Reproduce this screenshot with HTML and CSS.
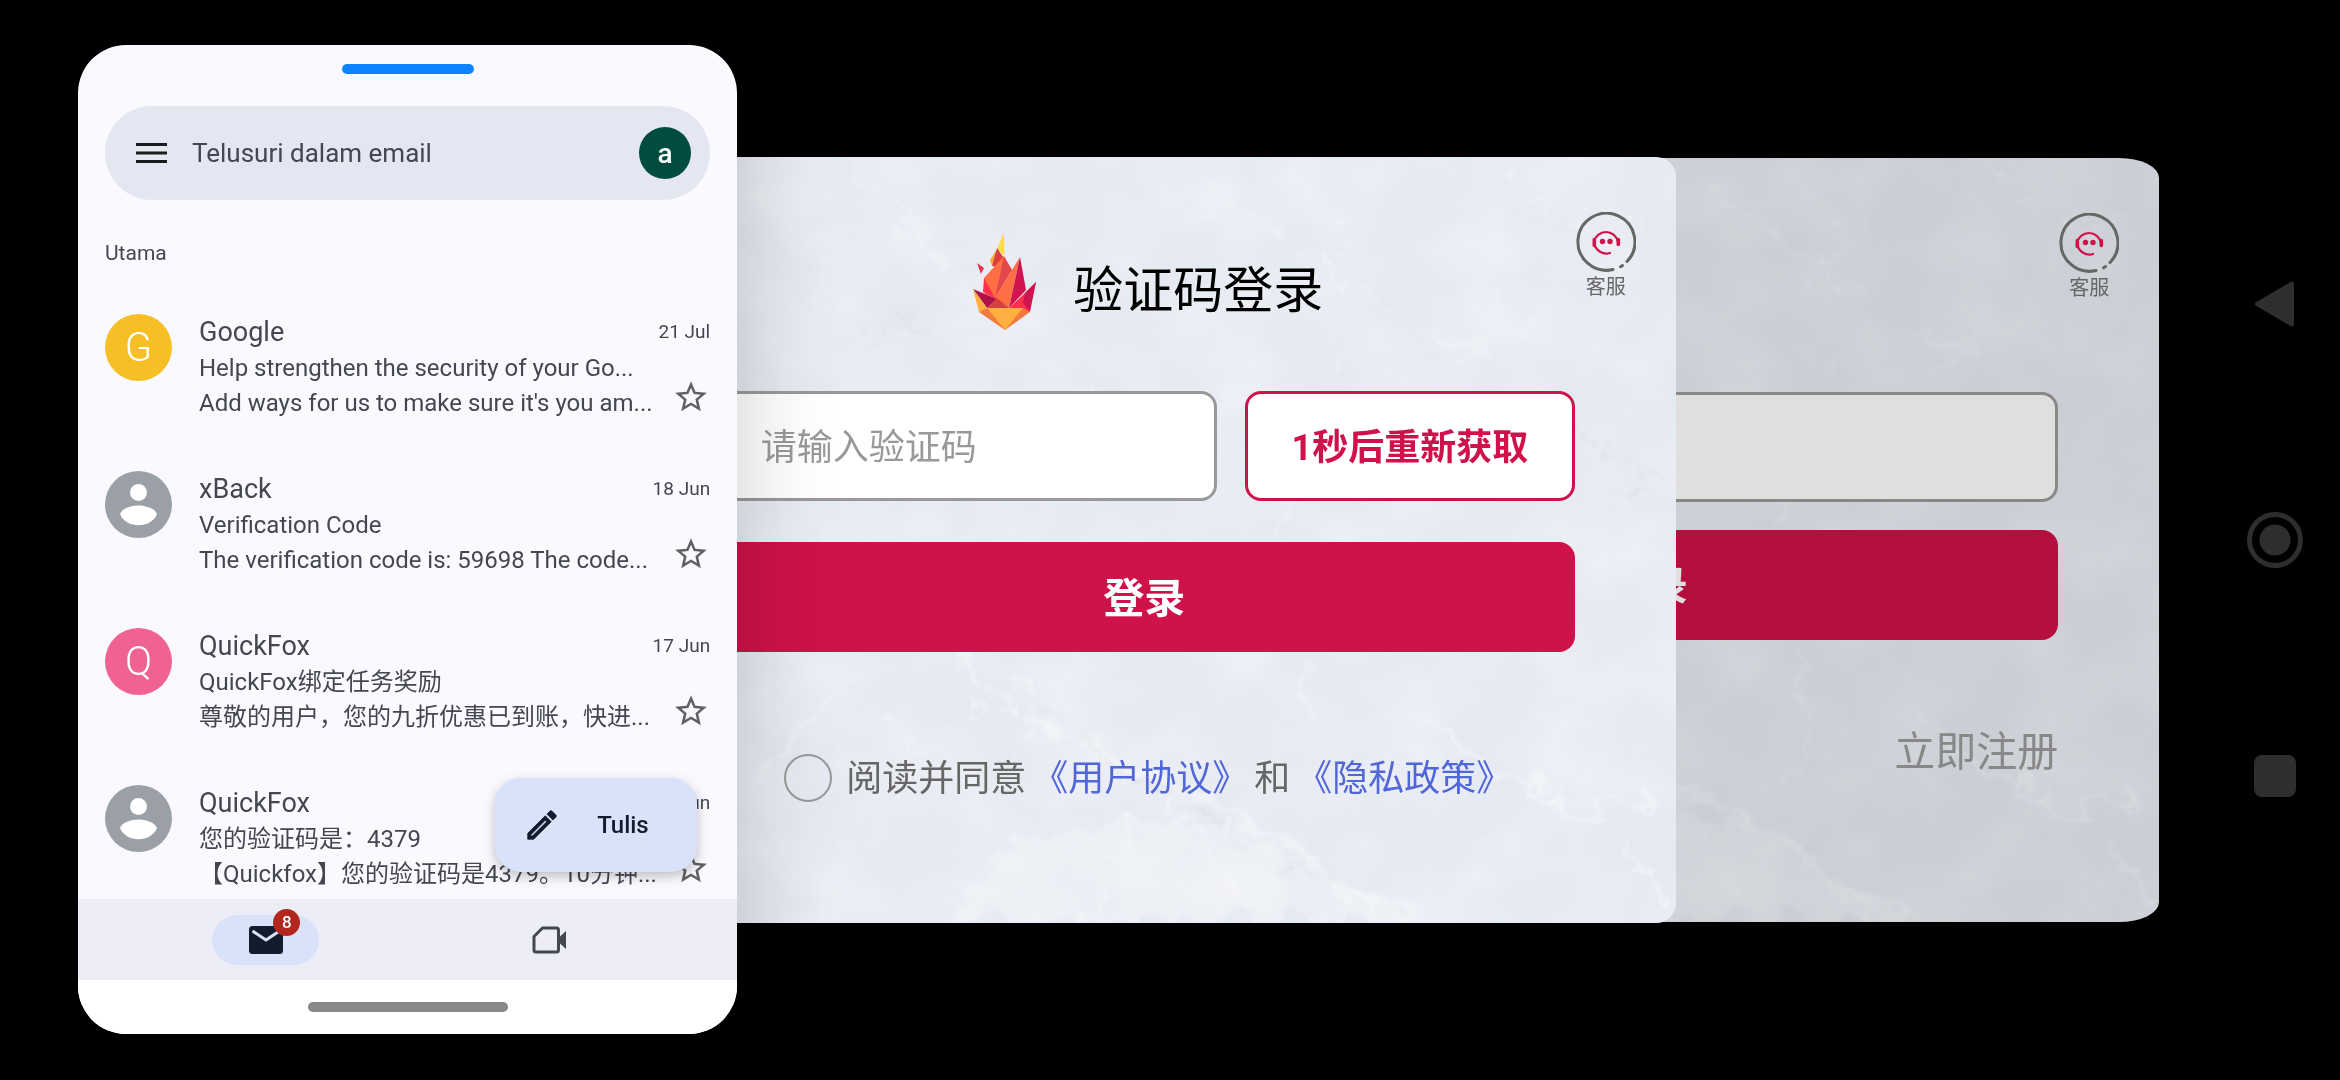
FILE: index.html
```html
<!DOCTYPE html>
<html lang="zh">
<head>
    <meta charset="UTF-8">
    <meta name="viewport" content="width=device-width, initial-scale=1.0">
    <title>Email</title>
    <link rel="stylesheet" href="styles.css">
</head>
<body>
    <!-- shared shapes -->
    <svg class="defs" width="0" height="0" aria-hidden="true">
        <defs>
            <filter id="clouds" x="0" y="0" width="100%" height="100%">
                <feTurbulence type="fractalNoise" baseFrequency="0.012 0.014" numOctaves="7" seed="7"/>
                <feColorMatrix values="0 0 0 0 1  0 0 0 0 1  0 0 0 0 1  2 0 0 0 -0.6"/>
            </filter>
            <filter id="rough" x="-10%" y="-10%" width="120%" height="120%">
                <feTurbulence type="fractalNoise" baseFrequency="0.03" numOctaves="5" seed="3" result="n"/>
                <feDisplacementMap in="SourceGraphic" in2="n" scale="60" xChannelSelector="R" yChannelSelector="G"/>
                <feGaussianBlur stdDeviation="1.5"/>
            </filter>
            <symbol id="marble" viewBox="0 0 1063 764" preserveAspectRatio="none">
                <rect width="1063" height="764" filter="url(#clouds)" opacity="0.3"/>
                <g filter="url(#rough)" fill="none" stroke="#fff" stroke-linecap="round">
                    <path d="M320 764L400 690L500 660L620 665L720 710L800 764Z" fill="#fff" stroke="none" opacity="0.25"/>
                    <path d="M340 490L410 560L500 600L600 645L700 700L760 764" stroke-width="8" opacity="0.3"/>
                    <path d="M400 520L450 590L540 620M500 600L520 660L470 764M560 640L640 764M360 550L410 555" stroke-width="4" opacity="0.3"/>
                    <path d="M130 630L200 560L250 500M270 560L310 590M690 490L700 580L680 640" stroke-width="4" opacity="0.3"/>
                    <path d="M820 560L880 610L980 660L1040 630M1020 690L1063 750" stroke-width="6" opacity="0.35"/>
                    <path d="M240 0L340 110L440 180M600 30L680 80L760 150L860 200M880 0L940 60L1063 80" stroke-width="4" opacity="0.25"/>
                    <path d="M880 130L870 190L820 240M730 180L700 290L640 420M480 200L500 300M760 40L700 130" stroke-width="4" opacity="0.25"/>
                </g>
                <g filter="url(#rough)" fill="none" stroke="#9aa3b0">
                    <path d="M110 220L160 260M240 190L330 160M200 380L260 420M430 540L480 600L720 720M930 250L1040 330" stroke-width="1" opacity="0.2"/>
                </g>
            </symbol>
            <symbol id="agent" viewBox="0 0 60 60">
                <path d="M37 57.5A28.5 28.5 0 1 1 51 49.500" fill="none" stroke="#666" stroke-width="3" stroke-linecap="round"/>
                <path d="M44.500 54.800L46.500 53.600" stroke="#666" stroke-width="3" stroke-linecap="round"/>
                <path d="M18 30A12.200 12.200 0 0 1 42 30M18.500 31.500A12 12 0 0 0 34 41" fill="none" stroke="#cf1249" stroke-width="2.200" stroke-linecap="round"/>
                <path d="M18.300 27.500v6M42.300 27.500v5" stroke="#cf1249" stroke-width="3.600" stroke-linecap="round"/>
                <circle cx="26.500" cy="29.500" r="2.700" fill="#cf1249"/>
                <circle cx="34" cy="29.500" r="2.700" fill="#cf1249"/>
            </symbol>
            <symbol id="star" viewBox="0 0 24 24">
                <path d="M22 9.240l-7.190-.620L12 2 9.190 8.630 2 9.240l5.460 4.730L5.820 21 12 17.270 18.180 21l-1.630-7.030L22 9.240zM12 15.400l-3.760 2.270 1-4.280-3.320-2.880 4.380-.380L12 6.100l1.710 4.040 4.380.380-3.320 2.880 1 4.280L12 15.400z"/>
            </symbol>
            <symbol id="person" viewBox="0 0 67 67">
                <circle cx="33.500" cy="21.500" r="8.500"/>
                <path d="M15 43C20 31.500 47 31.500 52 43C46 58 21 58 15 43Z"/>
            </symbol>
        </defs>
    </svg>

    <main class="stage">
        <section class="phone">
            <div class="handle"></div>

            <div class="search">
                <button class="icon-btn" aria-label="Menu">
                    <svg width="32" height="32" viewBox="0 0 32 32"><path d="M0 7.500h31M0 16h31M0 24.500h31" stroke="#1b1b1f" stroke-width="3.200"/></svg>
                </button>
                <input type="search" placeholder="Telusuri dalam email" aria-label="Telusuri dalam email">
                <button class="account">a</button>
            </div>

            <h2 class="label">Utama</h2>

            <ul class="mails">
                <li class="mail">
                    <span class="avatar yellow">G</span>
                    <div class="text">
                        <h3>Google</h3>
                        <p>Help strengthen the security of your Go...</p>
                        <p>Add ways for us to make sure it's you am...</p>
                    </div>
                    <div class="side">
                        <time>21 Jul</time>
                        <button class="icon-btn" aria-label="Star"><svg width="38" height="38"><use href="#star"/></svg></button>
                    </div>
                </li>
                <li class="mail">
                    <span class="avatar"><svg width="67" height="67"><use href="#person"/></svg></span>
                    <div class="text">
                        <h3>xBack</h3>
                        <p>Verification Code</p>
                        <p>The verification code is: 59698 The code...</p>
                    </div>
                    <div class="side">
                        <time>18 Jun</time>
                        <button class="icon-btn" aria-label="Star"><svg width="38" height="38"><use href="#star"/></svg></button>
                    </div>
                </li>
                <li class="mail">
                    <span class="avatar pink">Q</span>
                    <div class="text">
                        <h3>QuickFox</h3>
                        <p>QuickFox绑定任务奖励</p>
                        <p>尊敬的用户，您的九折优惠已到账，快进...</p>
                    </div>
                    <div class="side">
                        <time>17 Jun</time>
                        <button class="icon-btn" aria-label="Star"><svg width="38" height="38"><use href="#star"/></svg></button>
                    </div>
                </li>
                <li class="mail">
                    <span class="avatar"><svg width="67" height="67"><use href="#person"/></svg></span>
                    <div class="text">
                        <h3>QuickFox</h3>
                        <p>您的验证码是：4379</p>
                        <p>【Quickfox】您的验证码是4379。10分钟...</p>
                    </div>
                    <div class="side">
                        <time>17 Jun</time>
                        <button class="icon-btn" aria-label="Star"><svg width="38" height="38"><use href="#star"/></svg></button>
                    </div>
                </li>
            </ul>

            <nav class="tabs">
                <button class="compose">
                    <svg width="38" height="38" viewBox="0 0 24 24" fill="#111c2d" stroke="#111c2d" stroke-width="0.500"><path d="M14.060 9.020l.920.920L5.920 19H5v-.920l9.060-9.060M17.660 3c-.250 0-.510.100-.700.290l-1.830 1.830 3.750 3.750 1.830-1.830c.390-.390.390-1.020 0-1.410l-2.340-2.340c-.200-.200-.450-.290-.710-.290zm-3.600 3.190L3 17.250V21h3.750L17.810 9.940l-3.750-3.750z"/></svg>
                    Tulis
                </button>
                <div class="tab">
                    <button class="pill active" aria-label="Email">
                        <svg width="34" height="28" viewBox="0 0 34 28"><rect width="34" height="28" rx="3.500" fill="#111c2d"/><path d="M3.500 5L17 14L30.500 5" fill="none" stroke="#dae2f9" stroke-width="3"/></svg>
                        <span class="badge">8</span>
                    </button>
                </div>
                <div class="tab">
                    <button class="pill" aria-label="Meet">
                        <svg width="34" height="28" viewBox="0 0 34 28"><path d="M10.500 2H24.500Q26.500 2 26.500 4V24Q26.500 26 24.500 26H4Q2 26 2 24V10.500Z" fill="none" stroke="#44474f" stroke-width="3" stroke-linejoin="round"/><path d="M26.500 12L34 5V23L26.500 16Z" fill="#44474f"/></svg>
                    </button>
                </div>
            </nav>
            <div class="gesture"><span></span></div>
        </section>

        <section class="card login">
            <svg class="texture" aria-hidden="true"><use href="#marble"/></svg>
            <header>
                <svg width="64" height="98" viewBox="0 0 64 98">
                    <path d="M31 0L31.500 24L24 17Z" fill="#fddc45"/>
                    <path d="M24 17L17 28L19 34L24 17Z" fill="#f9a638"/>
                    <path d="M24 16L39 38L19 34Z" fill="#d8403f"/>
                    <path d="M31 24L11 46L12 62L23 67Z" fill="#ff6f43"/>
                    <path d="M31 24L39 38L22 66Z" fill="#e5484a"/>
                    <path d="M11 46L10 60L22 66Z" fill="#ff2e4c"/>
                    <path d="M47 25L39 38L22 66L36 76Z" fill="#ff6f43"/>
                    <path d="M47 25L53 58L36 76Z" fill="#d11350"/>
                    <path d="M63 50L56 80L36 76L52 61Z" fill="#ff2e4c"/>
                    <path d="M63 50L57 80L50 71L52 61Z" fill="#d11350"/>
                    <path d="M0 57L24 67L14 76Z" fill="#b01248"/>
                    <path d="M0 57L14 76L6 80Z" fill="#ffae3b"/>
                    <path d="M14 76L24 66L36 76Z" fill="#d8403f"/>
                    <path d="M6 80L14 76H50L57 80L32 98Z" fill="#f4793c"/>
                    <path d="M14 76H50L32 98Z" fill="#ffb041"/>
                    <path d="M4 31L11 36L8 42Z" fill="#ee2c50"/>
                </svg>
                <h1>验证码登录</h1>
            </header>
            <form>
                <div class="fields">
                    <input type="text" placeholder="请输入验证码" aria-label="请输入验证码">
                    <button type="button" class="resend">1秒后重新获取</button>
                </div>
                <button type="button" class="submit">登录</button>
                <div class="agree">
                    <input type="checkbox" id="agree">
                    <label for="agree">阅读并同意</label>
                    <a href="#">《用户协议》</a>
                    <span>和</span>
                    <a href="#">《隐私政策》</a>
                </div>
            </form>
            <button class="support"><svg width="60" height="60"><use href="#agent"/></svg>客服</button>
        </section>

        <section class="card back">
            <svg class="texture" aria-hidden="true"><use href="#marble"/></svg>
            <form>
                <div class="fields">
                    <input type="text" aria-label="账号">
                </div>
                <button type="button" class="submit">登录</button>
                <a class="register" href="#">立即注册</a>
            </form>
            <button class="support"><svg width="60" height="60"><use href="#agent"/></svg>客服</button>
        </section>

        <aside class="keys">
            <button class="icon-btn" aria-label="Back"><svg width="56" height="56" viewBox="0 0 56 56"><path d="M45 7.500V48.500L10 28Z" fill="#2e2e2e" stroke="#2e2e2e" stroke-width="4" stroke-linejoin="round"/></svg></button>
            <button class="icon-btn" aria-label="Home"><svg width="56" height="56" viewBox="0 0 56 56"><circle cx="28" cy="28" r="25.500" fill="none" stroke="#2e2e2e" stroke-width="5"/><circle cx="28" cy="28" r="15.500" fill="#2e2e2e"/></svg></button>
            <button class="icon-btn" aria-label="Recent"><svg width="56" height="56" viewBox="0 0 56 56"><rect x="7" y="7" width="42" height="42" rx="8" fill="#2e2e2e"/></svg></button>
        </aside>
    </main>
</body>
</html>
```
FILE: styles.css
```css
:root {
    --red: #cf1249;
    --ink: #44474f;
    --lilac: #dae2f9;
}
* {
    box-sizing: border-box;
    margin: 0;
    padding: 0;
}
body {
    background: #000;
    font-family: Roboto, "Noto Sans CJK SC", sans-serif;
    color: var(--ink);
}
button, input {
    font-family: inherit;
    border: none;
    background: none;
    color: inherit;
}
button {
    cursor: pointer;
}
a {
    text-decoration: none;
}
svg {
    display: block;
}
.defs {
    position: absolute;
}
.stage {
    display: flex;
    align-items: center;
    min-height: 100vh;
    padding: 0 0 1px 78px;
}
.icon-btn {
    display: block;
}

/* mail window */
.phone {
    position: relative;
    z-index: 3;
    flex: none;
    width: 29.140%;
    background: #faf9ff;
    border-radius: 48px;
    box-shadow: 0 0 100px rgba(0, 0, 0, 0.2);
    overflow: hidden;
}
.handle {
    width: 132px;
    height: 10px;
    margin: 19px auto 32px;
    border-radius: 5px;
    background: #0d84ff;
}
.search {
    display: flex;
    align-items: center;
    height: 94px;
    margin: 0 27px;
    padding: 0 19px 0 31px;
    border-radius: 47px;
    background: #e4e7f1;
}
.search input {
    flex: 1;
    min-width: 0;
    margin-left: 24px;
    font-size: 26px;
    outline: none;
}
.search input::placeholder {
    color: var(--ink);
}
.account {
    width: 52px;
    height: 52px;
    border-radius: 50%;
    background: #004d40;
    color: #fff;
    font-size: 28px;
    font-weight: 500;
}
.label {
    margin: 41px 27px 49px;
    font-size: 21px;
    line-height: 24px;
    font-weight: 400;
}
.mails {
    display: flex;
    flex-direction: column;
    gap: 50px;
    padding: 0 27px 7px;
    list-style: none;
}
.mail {
    display: flex;
}
.avatar {
    flex: none;
    width: 67px;
    height: 67px;
    margin-right: 27px;
    border-radius: 50%;
    background: #9aa0a6;
    color: #fff;
    fill: #fff;
    font-size: 40px;
    line-height: 67px;
    font-weight: 300;
    text-align: center;
}
.avatar.yellow {
    background: #f6bf26;
}
.avatar.pink {
    background: #f06292;
}
.text {
    flex: 1;
    min-width: 0;
    white-space: nowrap;
}
.text h3 {
    font-size: 27px;
    line-height: 36px;
    font-weight: 400;
}
.text p {
    font-size: 24px;
    line-height: 36px;
}
.text p + p {
    line-height: 35px;
}
.side {
    display: flex;
    flex-direction: column;
    align-items: flex-end;
    gap: 28px;
    font-size: 19px;
    line-height: 36px;
    fill: #5f6066;
}
.tabs {
    position: relative;
    display: flex;
    align-items: center;
    height: 81px;
    padding: 0 46px;
    background: #ecedf6;
}
.tab {
    flex: 1;
    display: flex;
    justify-content: center;
}
.pill {
    position: relative;
    display: flex;
    align-items: center;
    justify-content: center;
    width: 107px;
    height: 50px;
    border-radius: 25px;
}
.pill.active {
    background: var(--lilac);
}
.badge {
    position: absolute;
    top: -6px;
    right: 19px;
    width: 27px;
    height: 27px;
    border-radius: 50%;
    background: #b3261e;
    color: #fff;
    font-size: 17px;
    line-height: 27px;
    font-weight: 500;
}
.compose {
    position: absolute;
    right: 40px;
    bottom: 108px;
    display: flex;
    align-items: center;
    gap: 36px;
    width: 202px;
    height: 94px;
    padding-left: 28px;
    border-radius: 26px;
    background: var(--lilac);
    color: #111c2d;
    font-size: 24px;
    font-weight: 500;
    box-shadow: 0 4px 12px rgba(0, 0, 0, 0.25);
}
.gesture {
    display: flex;
    justify-content: center;
    height: 54px;
    padding-top: 22px;
    background: #fff;
}
.gesture span {
    width: 200px;
    height: 10px;
    border-radius: 5px;
    background: #888;
}

/* login windows */
.card {
    position: relative;
    flex: none;
    overflow: hidden;
}
.texture {
    position: absolute;
    inset: 0;
    width: 100%;
    height: 100%;
}
.card header, .card form {
    position: relative;
}
.login {
    z-index: 2;
    width: 47%;
    margin-left: -5.500%;
    padding: 75px 101px 120px;
    border-radius: 20px;
    background: #e5e9f1;
}
.login header {
    display: flex;
    align-items: flex-end;
    justify-content: center;
    gap: 36px;
    margin-bottom: 61px;
    padding-left: 8px;
}
.login h1 {
    color: #000;
    font-size: 50px;
    line-height: 78px;
    font-weight: 400;
}
.fields {
    display: flex;
    gap: 28px;
}
.fields input {
    flex: 1;
    min-width: 0;
    height: 110px;
    padding: 4px 44px 0;
    border: 3px solid #999;
    border-radius: 16px;
    background: #fff;
    font-size: 36px;
}
.fields input::placeholder {
    color: #999;
}
.resend {
    width: 330px;
    border: 3px solid var(--red);
    border-radius: 16px;
    background: #fff;
    color: var(--red);
    font-size: 36px;
    font-weight: 700;
}
.submit {
    display: block;
    width: 100%;
    height: 110px;
    margin-top: 41px;
    padding-bottom: 4px;
    border-radius: 16px;
    background: var(--red);
    color: #fff;
    font-size: 41px;
    font-weight: 700;
}
.resend {
    padding-bottom: 4px;
}
.agree {
    display: flex;
    align-items: center;
    justify-content: center;
    gap: 6px;
    margin-top: 101px;
    padding-left: 8px;
    font-size: 36px;
    line-height: 48px;
    color: #666;
    white-space: nowrap;
}
.agree label, .agree span, .agree a {
    padding-top: 2px;
}
.agree input {
    appearance: none;
    width: 48px;
    height: 48px;
    margin-right: 8px;
    border: 2px solid #999;
    border-radius: 50%;
}
.agree a {
    color: #5167d9;
}
.support {
    position: absolute;
    top: 55px;
    right: 40px;
    display: flex;
    flex-direction: column;
    align-items: center;
    color: #666;
    font-size: 20px;
    line-height: 30px;
}
.back {
    z-index: 1;
    width: 45.300%;
    margin-left: -23.930%;
    padding: 234px 101px 140px;
    border-radius: 40px / 20px;
    background: #cbcfd5;
}
.back .texture {
    opacity: 0.4;
}
.back .fields input {
    border-color: #888;
    background: #dfdfdf;
}
.back .submit {
    margin-top: 28px;
    background: #b50f40;
    color: #dfdfdf;
}
.register {
    display: block;
    margin-top: 82px;
    color: #888;
    font-size: 41px;
    line-height: 60px;
    text-align: right;
}

/* system keys */
.keys {
    flex: 1;
    display: flex;
    flex-direction: column;
    align-items: center;
    gap: 180px;
    padding-left: 51px;
}
```
